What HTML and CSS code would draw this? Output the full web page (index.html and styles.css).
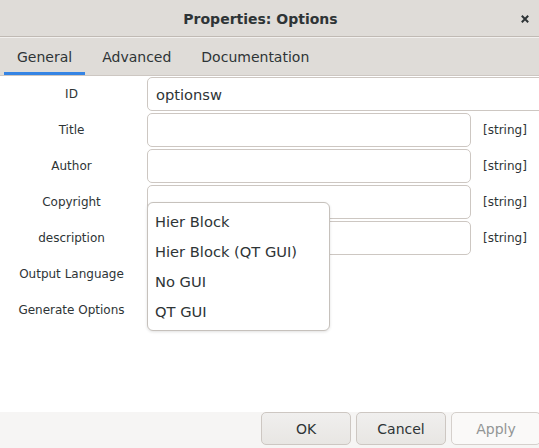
FILE: index.html
```html
<!DOCTYPE html>
<html>
<head>
<meta charset="utf-8">
<link rel="stylesheet" href="styles.css">
</head>
<body>
<div class="dialog">
  <header class="titlebar">
    <div class="title">Properties: Options</div>
    <div class="close">
      <svg width="8" height="8" viewBox="0 0 8 8"><path d="M0.8 0.8 L7.2 7.2 M7.2 0.8 L0.8 7.2" stroke="#2e3436" stroke-width="2" stroke-linecap="butt"/></svg>
    </div>
  </header>
  <div class="sep"></div>
  <nav class="tabs">
    <div class="tab active">General</div>
    <div class="tab">Advanced</div>
    <div class="tab">Documentation</div>
  </nav>
  <main class="content">
    <div class="form">
      <div class="label">ID</div>
      <div class="entry wide"><span>optionsw</span></div>

      <div class="label">Title</div>
      <div class="entry"></div>
      <div class="type">[string]</div>

      <div class="label">Author</div>
      <div class="entry"></div>
      <div class="type">[string]</div>

      <div class="label">Copyright</div>
      <div class="entry"></div>
      <div class="type">[string]</div>

      <div class="label">description</div>
      <div class="entry"></div>
      <div class="type">[string]</div>

      <div class="label">Output Language</div>
      <div class="slot"></div>
      <div></div>

      <div class="label">Generate Options</div>
      <div class="slot"></div>
      <div></div>
    </div>
    <div class="popup">
      <div class="item">Hier Block</div>
      <div class="item">Hier Block (QT GUI)</div>
      <div class="item">No GUI</div>
      <div class="item">QT GUI</div>
    </div>
  </main>
  <footer class="actions">
    <button class="btn">OK</button>
    <button class="btn">Cancel</button>
    <button class="btn disabled">Apply</button>
  </footer>
</div>
</body>
</html>
```
FILE: styles.css
```css
* { box-sizing: border-box; }
html, body {
  margin: 0;
  padding: 0;
  width: 539px;
  height: 448px;
  overflow: hidden;
  background: #ffffff;
  font-family: "DejaVu Sans", sans-serif;
  color: #2e3436;
}
.dialog {
  width: 539px;
  height: 448px;
  display: flex;
  flex-direction: column;
}
.titlebar {
  height: 37px;
  background: #dfdcd8;
  border-bottom: 1px solid #c0bab4;
  display: flex;
  align-items: center;
  padding-right: 10px;
}
.title {
  flex: 1;
  text-align: center;
  font-weight: bold;
  font-size: 14px;
  color: #2e3436;
  padding-top: 1px;
}
.close {
  width: 8px;
  height: 8px;
  display: flex;
  margin-top: 1px;
}
.sep {
  height: 1px;
  background: #f2f0ee;
}
.tabs {
  height: 38px;
  background: #dfdcd8;
  border-bottom: 1px solid #cdc7c2;
  display: flex;
  gap: 4px;
  padding-left: 4px;
}
.tab {
  padding: 4px 13px 0;
  font-size: 14px;
  color: #2e3436;
  display: flex;
  align-items: center;
  border-bottom: 3px solid transparent;
}
.tab.active {
  border-bottom-color: #3584e4;
}
.content {
  flex: 1;
  position: relative;
  background: #ffffff;
  padding-top: 1px;
}
.form {
  display: grid;
  grid-template-columns: 143px 324px 1fr;
  column-gap: 4px;
  row-gap: 2px;
  align-items: center;
}
.label {
  text-align: center;
  font-size: 12px;
  color: #2e3436;
}
.entry {
  height: 34px;
  border: 1px solid #cdc7c2;
  border-radius: 5px;
  background: #ffffff;
  display: flex;
  align-items: center;
  padding-left: 8px;
  font-size: 14.67px;
  color: #2e3436;
}
.entry.wide {
  grid-column: 2 / 4;
  margin-right: -6px;
}
.slot {
  height: 34px;
}
.type {
  font-size: 12px;
  padding-left: 8px;
  color: #2e3436;
}
.popup {
  position: absolute;
  left: 147px;
  top: 126px;
  width: 183px;
  height: 129px;
  background: #ffffff;
  border: 1px solid #c6c1bc;
  border-radius: 6px;
  box-shadow: 0 1px 3px rgba(0,0,0,0.12);
  padding-top: 3px;
}
.item {
  height: 30px;
  display: flex;
  align-items: center;
  padding-left: 7px;
  font-size: 14.67px;
  color: #2e3436;
}
.actions {
  height: 36px;
  background: #f6f5f4;
  display: flex;
  justify-content: flex-end;
  align-items: flex-start;
  gap: 5px;
  margin-right: -2px;
}
.btn {
  width: 90px;
  height: 33px;
  border: 1px solid #cdc7c2;
  border-radius: 5px;
  background: linear-gradient(#f0efee, #e8e6e3);
  font-family: "DejaVu Sans", sans-serif;
  font-size: 14px;
  color: #2e3436;
  padding: 0;
}
.btn.disabled {
  background: #faf9f8;
  color: #929595;
  border-color: #d5d0cc;
}
```
